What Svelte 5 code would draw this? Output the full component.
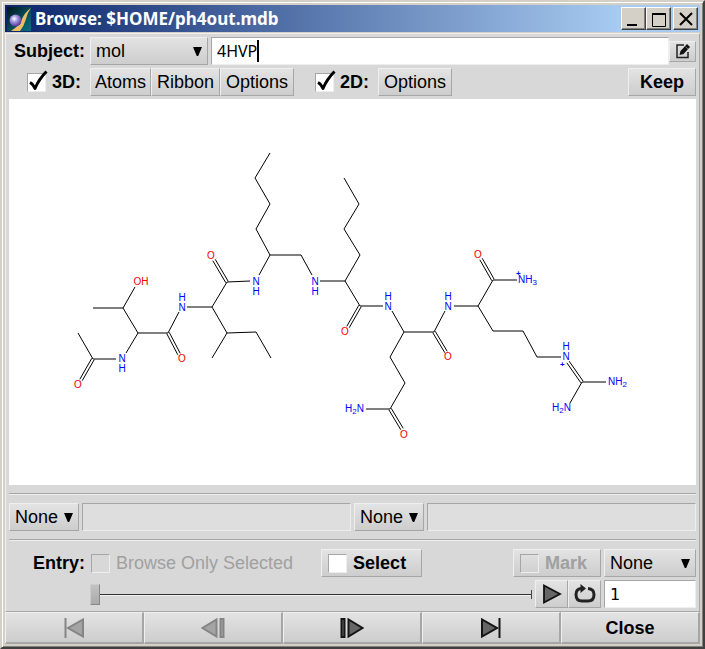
<script>
  let subject = $state('4HVP');
  let source = $state('mol');
  let show3d = $state(true);
  let show2d = $state(true);
  let selected = $state(false);
  let entry = $state('1');
  let position = $state(0);

  // single bonds: x1, y1, x2, y2
  const bonds = [
    [78, 333, 93, 359], [93, 359, 116, 359], [126, 353, 138, 333], [138, 333, 123, 308],
    [93, 308, 123, 308], [123, 308, 135, 287], [138, 333, 168, 333], [168, 333, 179, 312],
    [187, 307, 212, 307], [212, 307, 227, 282], [227, 282, 250, 281], [212, 307, 227, 333],
    [227, 333, 212, 358], [227, 333, 256, 332], [256, 332, 271, 358],
    [259, 275, 270, 255], [270, 255, 256, 229], [256, 229, 270, 204], [270, 204, 255, 178],
    [255, 178, 270, 153], [270, 255, 301, 255], [301, 255, 312, 275],
    [320, 281, 345, 281], [345, 281, 360, 255], [360, 255, 344, 229], [344, 229, 359, 204],
    [359, 204, 344, 178], [345, 281, 360, 306], [360, 306, 383, 306],
    [392, 311, 404, 332], [404, 332, 390, 357], [390, 357, 405, 383], [405, 383, 390, 409],
    [366, 409, 390, 409], [404, 332, 434, 332], [434, 332, 445, 311],
    [454, 306, 478, 306], [478, 306, 493, 280], [493, 280, 517, 280], [478, 306, 493, 331],
    [493, 331, 523, 331], [523, 331, 537, 357], [537, 357, 561, 357],
    [582, 382, 606, 382], [582, 382, 570, 403]
  ];

  const doubleBonds = [
    [93, 359, 81, 380], [168, 333, 179, 354], [227, 282, 214, 260], [360, 306, 348, 327],
    [434, 332, 446, 352], [493, 280, 481, 259], [390, 409, 402, 429], [568, 362, 582, 382]
  ];

  function pair([x1, y1, x2, y2]) {
    const len = Math.hypot(x2 - x1, y2 - y1);
    const dx = ((y2 - y1) / len) * 1.4;
    const dy = (-(x2 - x1) / len) * 1.4;
    return [
      [x1 + dx, y1 + dy, x2 + dx, y2 + dy],
      [x1 - dx, y1 - dy, x2 - dx, y2 - dy]
    ];
  }

  const lines = [...bonds, ...doubleBonds.flatMap(pair)];

  const oxygens = [[78, 388], [182, 362], [211, 259], [345, 335], [448, 360], [478, 258], [404, 438]];
  const nitrogens = [
    [122, 362, 372], [182, 311, 301], [256, 285, 295], [315, 285, 295],
    [388, 310, 300], [448, 310, 300], [566, 360, 350]
  ];
</script>

{#snippet arrow()}
  <svg class="arrow" width="9" height="9" viewBox="0 0 9 9" aria-hidden="true"><path d="M0 0H9L5.200 9H3.800Z" /></svg>
{/snippet}

{#snippet tick()}
  <svg class="tick" width="20" height="22" viewBox="0 0 20 22" aria-hidden="true">
    <path d="M2 12.500Q5 14 7 18.500Q11 9 18.500 1.500" />
  </svg>
{/snippet}

<div class="window">
  <header>
    <svg class="logo" width="24" height="24" viewBox="0 0 24 24" aria-hidden="true">
      <defs>
        <linearGradient id="sea" x1="0" y1="0" x2="1" y2="1">
          <stop offset="0" stop-color="#04131c" /><stop offset=".6" stop-color="#075260" /><stop offset="1" stop-color="#08717d" />
        </linearGradient>
        <radialGradient id="ball" cx=".4" cy=".35" r=".65">
          <stop offset="0" stop-color="#fff" /><stop offset=".4" stop-color="#a99bdf" /><stop offset="1" stop-color="#4d35a0" />
        </radialGradient>
      </defs>
      <rect width="24" height="24" fill="url(#sea)" />
      <path d="M24 1Q18 5 15 12Q12 19 4 24H13Q17 19 19 12Q20 6 24 1Z" fill="#efbd66" />
      <circle cx="8.500" cy="13.500" r="6" fill="url(#ball)" />
    </svg>
    <h1>Browse: $HOME/ph4out.mdb</h1>
    <div class="caption">
      <button aria-label="Minimize"><svg width="20" height="18" viewBox="0 0 20 18"><path d="M3 15H13" /></svg></button>
      <button aria-label="Maximize"><svg width="20" height="18" viewBox="0 0 20 18"><path class="thin" d="M3.500 4V16.500H16.500V4" /><path d="M3 4H17" /></svg></button>
      <button class="shut" aria-label="Close window"><svg width="20" height="18" viewBox="0 0 20 18"><path d="M4 3L16 15M16 3L4 15" /></svg></button>
    </div>
  </header>

  <main>
    <div class="body">
      <div class="row">
        <label class="lead" for="subject-source">Subject:</label>
        <div class="pick source">
          <select id="subject-source" bind:value={source}><option>mol</option></select>{@render arrow()}
        </div>
        <div class="field">
          <input type="text" aria-label="Subject value" bind:value={subject} />
          <span class="caret"></span>
        </div>
        <button class="raised edit" aria-label="Edit">
          <svg width="16" height="16" viewBox="0 0 16 16">
            <path d="M9 2H2V14.500H13V9" fill="none" stroke="#222" stroke-width="1.500" />
            <path d="M4.500 12L5.500 8L12 1L15 4L8.500 11Z" fill="#111" /><path d="M10.500 3.500L13 6" stroke="#aaa" stroke-width=".6" />
          </svg>
        </button>
      </div>

      <div class="row">
        <label class="toggle three"><span class="box"><input type="checkbox" bind:checked={show3d} />{#if show3d}{@render tick()}{/if}</span>3D:</label>
        <div class="group">
          <button class="raised atoms">Atoms</button>
          <button class="raised ribbon">Ribbon</button>
          <button class="raised options">Options</button>
        </div>
        <label class="toggle two"><span class="box"><input type="checkbox" bind:checked={show2d} />{#if show2d}{@render tick()}{/if}</span>2D:</label>
        <button class="raised options">Options</button>
        <button class="raised keep">Keep</button>
      </div>

      <div class="canvas">
        <svg viewBox="9 99 687 386" role="img" aria-label="2D structure of 4HVP">
          <g class="bonds">
            {#each lines as [x1, y1, x2, y2]}<line {x1} {y1} {x2} {y2} />{/each}
          </g>
          <g class="oxygen" text-anchor="middle">
            {#each oxygens as [x, y]}<text {x} {y}>O</text>{/each}
            <text x="141" y="285">OH</text>
          </g>
          <g class="nitrogen" text-anchor="middle">
            {#each nitrogens as [x, y, hy]}<text {x} {y}>N</text><text {x} y={hy}>H</text>{/each}
          </g>
          <g class="nitrogen">
            <text x="345" y="412">H<tspan class="sub" dy="2">2</tspan><tspan dy="-2">N</tspan></text>
            <text x="552" y="411">H<tspan class="sub" dy="2">2</tspan><tspan dy="-2">N</tspan></text>
            <text x="608" y="385">NH<tspan class="sub" dy="2">2</tspan></text>
            <text x="518" y="283">NH<tspan class="sub" dy="2">3</tspan></text>
            <text class="charge" x="516" y="276">+</text>
            <text class="charge" x="560" y="367">+</text>
          </g>
        </svg>
      </div>

      <hr />

      <div class="row">
        <div class="pick narrow"><select aria-label="First field"><option>None</option></select>{@render arrow()}</div>
        <input class="sunken" type="text" aria-label="First field value" readonly />
        <div class="pick narrow"><select aria-label="Second field"><option>None</option></select>{@render arrow()}</div>
        <input class="sunken" type="text" aria-label="Second field value" readonly />
      </div>

      <hr />

      <div class="row">
        <span class="lead">Entry:</span>
        <label class="toggle only off"><span class="box"><input type="checkbox" disabled /></span>Browse Only Selected</label>
        <label class="toggle raised select"><span class="box"><input type="checkbox" bind:checked={selected} />{#if selected}{@render tick()}{/if}</span>Select</label>
        <label class="toggle raised mark off"><span class="box"><input type="checkbox" disabled /></span>Mark</label>
        <div class="pick field-end"><select aria-label="Mark field"><option>None</option></select>{@render arrow()}</div>
      </div>

      <div class="row slide">
        <input class="slider" type="range" min="0" max="100" aria-label="Entry position" bind:value={position} />
        <div class="group">
          <button class="raised tool" aria-label="Play"><svg width="20" height="20" viewBox="0 0 20 20"><path d="M2 1.500L18 10L2 18.500Z" fill="#666" stroke="#111" stroke-width="1.800" /></svg></button>
          <button class="raised tool" aria-label="Loop">
            <svg width="22" height="20" viewBox="0 0 22 20">
              <path d="M7 4.500Q2 5 2 10.500Q2 17 8 17H14Q20 17 20 10.500Q20 5 14 4.500" fill="none" stroke="#222" stroke-width="3" />
              <path d="M6.500 0L12 4.500L6.500 9Z" fill="#222" />
            </svg>
          </button>
        </div>
        <input class="number" type="text" aria-label="Entry number" bind:value={entry} />
      </div>
    </div>

    <nav>
      <button class="dim" aria-label="First entry" disabled><svg width="20" height="20" viewBox="0 0 20 20"><path d="M1.500 0V20" /><path d="M19 1.500V18.500L4 10Z" /></svg></button>
      <button class="dim" aria-label="Previous entry" disabled><svg width="24" height="20" viewBox="0 0 24 20"><path d="M15.500 1.500V18.500L1.500 10Z" /><path d="M19.500 1H22.500V19H19.500Z" /></svg></button>
      <button aria-label="Next entry"><svg width="24" height="20" viewBox="0 0 24 20"><path d="M8.500 1.500V18.500L22.500 10Z" /><path d="M1.500 1H4.500V19H1.500Z" /></svg></button>
      <button aria-label="Last entry"><svg width="20" height="20" viewBox="0 0 20 20"><path d="M18.500 0V20" /><path d="M1 1.500V18.500L16 10Z" /></svg></button>
      <button>Close</button>
    </nav>
  </main>
</div>

<style>
  :global(body) { margin: 0; }
  .window, .window * { box-sizing: border-box; }
  .window {
    min-height: 100vh;
    display: flex;
    flex-direction: column;
    padding: 3px;
    background: #d4d0c8;
    border: 2px solid;
    border-color: #d4d0c8 #404040 #404040 #d4d0c8;
    box-shadow: inset 1px 1px #fff, inset -1px -1px #808080;
    font: 18px/20px "Liberation Sans", Arial, sans-serif;
    color: #000;
  }
  button, input, select { margin: 0; font: inherit; color: inherit; border-radius: 0; }
  button { padding: 0; display: flex; align-items: center; justify-content: center; }

  header {
    display: flex;
    align-items: center;
    height: 27px;
    padding: 0 2px;
    background: linear-gradient(90deg, #0a246a, #a6caf0 88%);
  }
  h1 {
    flex: 1;
    margin: 0 0 0 4px;
    font: bold 17px/26px "Noto Sans", sans-serif;
    color: #fff;
    white-space: nowrap;
  }
  .caption { display: flex; }
  .caption button {
    width: 25px;
    height: 23px;
    background: #d4d0c8;
    border: 1px solid;
    border-color: #fff #404040 #404040 #fff;
    box-shadow: inset -1px -1px #808080;
  }
  .caption .shut { margin-left: 2px; }
  .caption path { fill: none; stroke: #000; stroke-width: 2; }
  .caption .thin { stroke-width: 1; }

  main {
    flex: 1;
    display: flex;
    flex-direction: column;
    margin-top: 1px;
    background: #d8d8d8;
  }
  .body {
    flex: 1;
    display: flex;
    flex-direction: column;
    gap: 3px;
    padding: 3px;
    border: 1px solid;
    border-color: #f0f0f0 #a8a8a8 #a8a8a8 #f0f0f0;
  }
  .row { display: flex; align-items: center; gap: 3px; height: 28px; }
  .lead { width: 78px; padding-right: 2px; font-weight: bold; text-align: right; }

  .raised, .pick select, nav button {
    background: linear-gradient(#e3e3e3, #cdcdcd);
    border: 1px solid;
    border-color: #efefef #a6a6a6 #a6a6a6 #efefef;
  }
  .raised { height: 28px; }
  .pick { position: relative; }
  .pick select { appearance: none; display: block; width: 100%; height: 28px; padding: 0 5px; }
  .arrow { position: absolute; right: 6px; top: 10px; pointer-events: none; }
  .source { width: 118px; }
  .narrow { width: 70px; }
  .field-end, .number { width: 92px; }

  .field { position: relative; flex: 1; margin-right: -3px; }
  .field input, .number {
    height: 28px;
    padding: 0 5px;
    background: #fff;
    border: 1px solid;
    border-color: #a6a6a6 #eee #eee #a6a6a6;
    outline: 0;
    font: 16px/20px "Noto Sans", sans-serif;
  }
  .number { font-family: "DejaVu Sans", sans-serif; }
  .field input { display: block; width: 100%; caret-color: transparent; }
  .caret { position: absolute; left: 46px; top: 3px; width: 2px; height: 22px; background: #000; }
  .edit { width: 27px; height: 21px; }

  .toggle { display: flex; align-items: center; gap: 6px; font-weight: bold; }
  .box { position: relative; width: 19px; height: 19px; }
  .box input {
    appearance: none;
    display: block;
    width: 19px;
    height: 19px;
    background: #fff;
    border: 1px solid;
    border-color: #a6a6a6 #eee #eee #a6a6a6;
  }
  .off { color: #a0a0a0; }
  .off .box input { background: transparent; }
  .tick { position: absolute; left: 1px; top: -3px; pointer-events: none; }
  .tick path { fill: none; stroke: #000; stroke-width: 3; stroke-linejoin: round; }
  .three { width: 78px; padding-left: 18px; }
  .two { width: 60px; margin-left: 18px; }
  .group { display: flex; }
  .atoms { width: 61px; }
  .ribbon { width: 69px; }
  .options { width: 74px; }
  .keep { width: 68px; margin-left: auto; font-weight: bold; }

  .canvas { flex: 1; display: flex; background: #fff; min-height: 200px; }
  .canvas svg { flex: 1; display: block; min-width: 0; }
  .bonds line { stroke: #000; stroke-width: 1; }
  .canvas text { font: 10px "Liberation Sans", Arial, sans-serif; }
  .oxygen { fill: #f00000; }
  .nitrogen { fill: #0000ff; }
  .canvas .sub { font-size: 8px; }
  .canvas .charge { font-size: 8px; font-weight: bold; }

  hr { width: 100%; height: 2px; margin: 5px 0; border: 0; border-top: 1px solid #a6a6a6; background: #efefef; }
  .sunken {
    flex: 1;
    min-width: 0;
    height: 28px;
    background: #dedede;
    border: 1px solid;
    border-color: #a6a6a6 #eee #eee #a6a6a6;
  }

  .only { font-weight: normal; margin-left: 1px; }
  .select { width: 101px; padding-left: 6px; margin-left: 25px; }
  .mark { width: 88px; padding-left: 6px; margin-left: auto; }

  .slide { padding-left: 81px; }
  .slider {
    appearance: none;
    flex: 1;
    min-width: 0;
    height: 21px;
    background:
      linear-gradient(#444, #444) right center / 1px 9px no-repeat,
      linear-gradient(#f0f0f0, #f0f0f0) left 0 top 11px / 100% 1px no-repeat,
      linear-gradient(#333, #333) left center / 100% 1px no-repeat;
  }
  .slider::-webkit-slider-thumb {
    appearance: none;
    width: 10px;
    height: 21px;
    background: linear-gradient(#c2c2c2, #aaa);
    border: 1px solid;
    border-color: #ccc #888 #888 #ccc;
  }
  .tool { width: 33px; }

  nav { display: grid; grid-template-columns: repeat(5, 1fr); }
  nav button { height: 32px; border-width: 1px 2px 2px 1px; font-weight: bold; }
  nav path { fill: #666; stroke: #151515; stroke-width: 2; }
  nav .dim path { fill: #a4a4a4; stroke: #858585; }
</style>
